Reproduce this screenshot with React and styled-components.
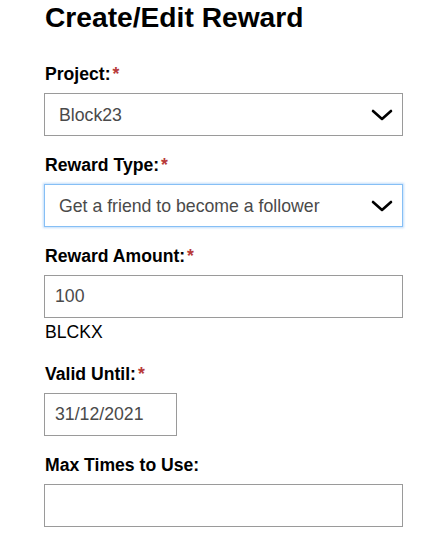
import React from "react"
import styled, { createGlobalStyle } from "styled-components"

const GlobalStyle = createGlobalStyle`
  body {
    margin: 0;
    background: #fff;
    font-family: "Liberation Sans", Arial, sans-serif;
    color: #000;
  }
`

const Page = styled.div`
  padding: 1px 30px 0 44px;
  width: 359px;
`

const Title = styled.h1`
  margin: 0 0 31px 1px;
  font-size: 28.2px;
  line-height: 32px;
  font-weight: bold;
`

const Field = styled.div`
  display: flex;
  flex-direction: column;
  & + & {
    margin-top: 19px;
  }
`

const Label = styled.label`
  display: block;
  margin: 0 0 9px 1px;
  font-size: 17.6px;
  line-height: 20px;
  font-weight: bold;
  .required {
    color: #b83a3a;
    margin-left: 2px;
  }
`

const SelectWrap = styled.div`
  position: relative;
  svg {
    position: absolute;
    right: 10px;
    top: 16px;
    pointer-events: none;
  }
`

const Select = styled.select`
  appearance: none;
  box-sizing: border-box;
  width: 100%;
  height: 43px;
  margin: 0;
  padding: 0 40px 0 14px;
  border: 1px solid ${({ focused }) => (focused ? "#86bff5" : "#9a9a9a")};
  box-shadow: ${({ focused }) =>
    focused ? "0 0 2px 1px rgba(120, 180, 245, 0.45)" : "none"};
  border-radius: 0;
  background: #fff;
  font-family: "Liberation Sans", Arial, sans-serif;
  font-size: 17.7px;
  color: #4a4a4a;
  outline: none;
`

const Input = styled.input`
  box-sizing: border-box;
  width: ${({ narrow }) => (narrow ? "133px" : "100%")};
  height: 43px;
  margin: 0;
  padding: 0 10px;
  border: 1px solid #9a9a9a;
  border-radius: 0;
  background: #fff;
  font-family: "Liberation Sans", Arial, sans-serif;
  font-size: 17.7px;
  color: #4a4a4a;
  outline: none;
`

const Unit = styled.div`
  margin: 4px 0 3px 1px;
  font-size: 17.6px;
  line-height: 20px;
`

const Chevron = () => (
  <svg width="22" height="12" viewBox="0 0 22 12">
    <path
      d="M2 2 L11 10 L20 2"
      fill="none"
      stroke="#000"
      strokeWidth="2.6"
      strokeLinecap="round"
      strokeLinejoin="round"
    />
  </svg>
)

const RequiredLabel = ({ children, required }) => (
  <Label>
    {children}
    {required && <span className="required">*</span>}
  </Label>
)

const App = () => (
  <Page>
    <GlobalStyle />
    <Title>Create/Edit Reward</Title>

    <Field>
      <RequiredLabel required>Project:</RequiredLabel>
      <SelectWrap>
        <Select defaultValue="block23">
          <option value="block23">Block23</option>
        </Select>
        <Chevron />
      </SelectWrap>
    </Field>

    <Field>
      <RequiredLabel required>Reward Type:</RequiredLabel>
      <SelectWrap>
        <Select focused defaultValue="friend">
          <option value="friend">Get a friend to become a follower</option>
        </Select>
        <Chevron />
      </SelectWrap>
    </Field>

    <Field>
      <RequiredLabel required>Reward Amount:</RequiredLabel>
      <Input type="text" defaultValue="100" />
      <Unit>BLCKX</Unit>
    </Field>

    <Field>
      <RequiredLabel required>Valid Until:</RequiredLabel>
      <Input type="text" narrow defaultValue="31/12/2021" />
    </Field>

    <Field>
      <RequiredLabel>Max Times to Use:</RequiredLabel>
      <Input type="text" />
    </Field>
  </Page>
)

export default App
